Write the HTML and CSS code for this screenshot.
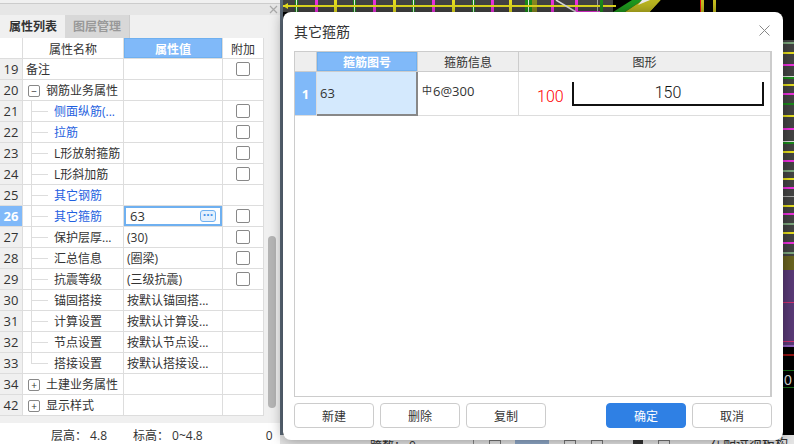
FILE: index.html
```html
<!DOCTYPE html>
<html lang="zh">
<head>
  <meta charset="UTF-8">
  <meta name="viewport" content="width=device-width, initial-scale=1.0">
  <title>其它箍筋</title>
  <link rel="stylesheet" href="styles.css">
</head>
<body>
  <!-- 左侧属性面板 -->
  <div class="panel">
    <div class="panel-title">
      <svg class="panel-close" width="9" height="9" viewBox="0 0 9 9"><path d="M1 1l7 7M8 1l-7 7" stroke="#aaa" stroke-width="1.2" fill="none"/></svg>
    </div>
    <div class="tabs">
      <div class="tab active">属性列表</div>
      <div class="tab">图层管理</div>
    </div>
    <div class="panel-body">
      <table class="prop-table">
        <colgroup><col class="c-idx"><col class="c-name"><col class="c-val"><col class="c-add"></colgroup>
        <thead>
          <tr><th class="blank"></th><th>属性名称</th><th class="sel-head">属性值</th><th>附加</th></tr>
        </thead>
        <tbody>
          <tr><td class="idx">19</td><td class="name">备注</td><td></td><td class="add"><span class="check"></span></td></tr>
          <tr><td class="idx">20</td><td class="name"><span class="group"><span class="toggle">−</span>钢筋业务属性</span></td><td></td><td></td></tr>
          <tr><td class="idx">21</td><td class="leaf link">侧面纵筋(...</td><td></td><td class="add"><span class="check"></span></td></tr>
          <tr><td class="idx">22</td><td class="leaf link">拉筋</td><td></td><td class="add"><span class="check"></span></td></tr>
          <tr><td class="idx">23</td><td class="leaf">L形放射箍筋</td><td></td><td class="add"><span class="check"></span></td></tr>
          <tr><td class="idx">24</td><td class="leaf">L形斜加筋</td><td></td><td class="add"><span class="check"></span></td></tr>
          <tr><td class="idx">25</td><td class="leaf link">其它钢筋</td><td></td><td></td></tr>
          <tr><td class="idx current">26</td><td class="leaf link">其它箍筋</td><td class="editing"><span class="edit-box"><span>63</span><span class="more">···</span></span></td><td class="add"><span class="check"></span></td></tr>
          <tr><td class="idx">27</td><td class="leaf">保护层厚...</td><td class="val">(30)</td><td class="add"><span class="check"></span></td></tr>
          <tr><td class="idx">28</td><td class="leaf">汇总信息</td><td class="val">(圈梁)</td><td class="add"><span class="check"></span></td></tr>
          <tr><td class="idx">29</td><td class="leaf">抗震等级</td><td class="val">(三级抗震)</td><td class="add"><span class="check"></span></td></tr>
          <tr><td class="idx">30</td><td class="leaf">锚固搭接</td><td class="val">按默认锚固搭...</td><td></td></tr>
          <tr><td class="idx">31</td><td class="leaf">计算设置</td><td class="val">按默认计算设...</td><td></td></tr>
          <tr><td class="idx">32</td><td class="leaf">节点设置</td><td class="val">按默认节点设...</td><td></td></tr>
          <tr><td class="idx">33</td><td class="leaf last">搭接设置</td><td class="val">按默认搭接设...</td><td></td></tr>
          <tr><td class="idx">34</td><td class="name"><span class="group"><span class="toggle">+</span>土建业务属性</span></td><td></td><td></td></tr>
          <tr><td class="idx">42</td><td class="name"><span class="group"><span class="toggle">+</span>显示样式</span></td><td></td><td></td></tr>
        </tbody>
      </table>
      <div class="scrollbar"><div class="thumb"></div></div>
    </div>
    <div class="panel-status">
      <span class="floor-h">层高：&nbsp;4.8</span>
      <span class="floor-e">标高：&nbsp;0~4.8</span>
      <span class="floor-n">0</span>
    </div>
  </div>

  <!-- 绘图区（只露出对话框四周） -->
  <div class="canvas">
    <svg class="drawing" width="514" height="435" viewBox="280 0 514 435">
      <rect x="280" y="0" width="514" height="435" fill="#000"/>
      <rect x="280" y="0" width="3" height="435" fill="#5d6b7a"/>
      <rect x="283" y="0" width="330" height="12" fill="#444"/>
      <rect x="295" y="0" width="3" height="12" fill="#1a8c1a"/><rect x="296" y="0" width="1" height="12" fill="#eee"/>
      <rect x="315" y="0" width="3" height="12" fill="#f030e0"/>
      <rect x="334" y="0" width="3" height="12" fill="#e8e020"/>
      <rect x="353" y="0" width="3" height="12" fill="#1a8c1a"/><rect x="354" y="0" width="1" height="12" fill="#eee"/>
      <rect x="373" y="0" width="3" height="12" fill="#f030e0"/>
      <rect x="393" y="0" width="3" height="12" fill="#e8e020"/>
      <rect x="412" y="0" width="3" height="12" fill="#1a8c1a"/><rect x="413" y="0" width="1" height="12" fill="#eee"/>
      <rect x="432" y="0" width="3" height="12" fill="#f030e0"/>
      <rect x="452" y="0" width="3" height="12" fill="#e8e020"/>
      <rect x="472" y="0" width="3" height="12" fill="#1a8c1a"/><rect x="473" y="0" width="1" height="12" fill="#eee"/>
      <rect x="491" y="0" width="3" height="12" fill="#f030e0"/>
      <rect x="509" y="0" width="3" height="12" fill="#e8e020"/>
      <rect x="525" y="0" width="7" height="12" fill="#1a8c1a"/><rect x="528" y="0" width="1" height="12" fill="#eee"/>
      <rect x="532" y="0" width="5" height="12" fill="#8a8a20"/>
      <rect x="551" y="0" width="3" height="12" fill="#f030e0"/>
      <rect x="575" y="0" width="3" height="12" fill="#f030e0"/>
      <rect x="575" y="11" width="25" height="1" fill="#f030e0"/>
      <rect x="597" y="0" width="1" height="12" fill="#aaa"/>
      <rect x="283" y="5" width="333" height="2" fill="#e8e020"/>
      <path d="M556 0l20 12" stroke="#ddd" stroke-width="1.5"/>
      <rect x="600" y="0" width="3" height="12" fill="#1a8c1a"/>
      <polygon points="613,12 625,12 643,0 632,0" fill="#1f9a1f"/>
      <polygon points="625,12 650,12 661,0 643,0" fill="#bcb820"/>
      <polygon points="642,0 650,0 638,5" fill="#eee"/>
      <polygon points="650,12 661,12 661,0" fill="#000"/>
      <rect x="700" y="0" width="1" height="12" fill="#e01010"/>
      <rect x="701" y="0" width="3" height="12" fill="#c8c020"/>
      <rect x="713" y="0" width="3" height="12" fill="#c8c020"/>
      <polygon points="283,6 288,3 288,9" fill="#e8e020"/>
      <rect x="783" y="40" width="11" height="216" fill="#444"/>
      <rect x="783" y="42" width="11" height="2" fill="#7ea87e"/>
      <rect x="783" y="52" width="11" height="2" fill="#e8e020"/>
      <rect x="783" y="64" width="11" height="2" fill="#f030e0"/>
      <rect x="783" y="76" width="11" height="1" fill="#ddd"/><rect x="783" y="77" width="11" height="2" fill="#1a8c1a"/>
      <rect x="783" y="84" width="11" height="2" fill="#e8e020"/>
      <rect x="783" y="93" width="11" height="2" fill="#f030e0"/>
      <rect x="783" y="103" width="11" height="2" fill="#1a8c1a"/>
      <rect x="783" y="115" width="11" height="2" fill="#e8e020"/>
      <rect x="783" y="128" width="11" height="2" fill="#f030e0"/>
      <rect x="783" y="141" width="11" height="1" fill="#ddd"/><rect x="783" y="142" width="11" height="2" fill="#1a8c1a"/>
      <rect x="783" y="151" width="11" height="2" fill="#e8e020"/>
      <rect x="783" y="160" width="11" height="2" fill="#f030e0"/>
      <rect x="783" y="170" width="11" height="2" fill="#7ea87e"/>
      <rect x="783" y="178" width="11" height="2" fill="#e8e020"/>
      <rect x="783" y="187" width="11" height="2" fill="#f030e0"/>
      <rect x="783" y="196" width="11" height="1" fill="#aaa"/>
      <rect x="783" y="205" width="11" height="2" fill="#e8e020"/>
      <rect x="783" y="213" width="11" height="2" fill="#f030e0"/>
      <rect x="783" y="223" width="11" height="2" fill="#7ea87e"/>
      <rect x="783" y="232" width="11" height="2" fill="#e8e020"/>
      <rect x="783" y="242" width="11" height="2" fill="#f030e0"/>
      <rect x="783" y="252" width="11" height="2" fill="#7ea87e"/>
      <rect x="783" y="256" width="11" height="14" fill="#6a6420"/>
      <rect x="783" y="270" width="11" height="76" fill="#5a3a78"/>
      <rect x="783" y="302" width="11" height="1" fill="#d03070"/>
      <rect x="783" y="341" width="11" height="1" fill="#d03070"/>
      <rect x="783" y="345" width="11" height="2" fill="#9060c0"/>
      <rect x="783" y="354" width="11" height="2" fill="#901010"/>
      <rect x="783" y="370" width="11" height="1" fill="#1a6c1a"/>
      <rect x="783" y="387" width="11" height="1" fill="#1a6c1a"/>
      <text x="784" y="385" fill="#ddd" font-size="14" font-family="Liberation Sans, sans-serif">0</text>
    </svg>
    <div class="canvas-status">
      <span class="cs-span">跨数：&nbsp;0</span>
      <span class="cs-tool cs-line"></span>
      <span class="cs-tool cs-box"></span>
      <span class="cs-tool cs-active"></span>
      <span class="cs-tool cs-box"></span>
      <span class="cs-tool cs-box"></span>
      <span class="cs-tool cs-dark"></span>
      <span class="cs-tool cs-box"></span>
      <span class="cs-hint">在配过须板构</span>
    </div>
  </div>

  <!-- 对话框 -->
  <div class="dialog">
    <div class="dialog-head">
      <span class="dialog-title">其它箍筋</span>
      <svg width="11" height="11" viewBox="0 0 11 11"><path d="M.5.5l10 10M10.5.5l-10 10" stroke="#888" stroke-width="1" fill="none"/></svg>
    </div>
    <div class="grid-wrap">
      <table class="stirrup-table">
        <colgroup><col class="s-idx"><col class="s-no"><col class="s-info"><col></colgroup>
        <thead>
          <tr><th></th><th class="sel-head">箍筋图号</th><th>箍筋信息</th><th>图形</th></tr>
        </thead>
        <tbody>
          <tr>
            <td class="idx current">1</td>
            <td class="cell-sel">63</td>
            <td class="cell-info"><span class="rebar">中</span>6@300</td>
            <td>
              <div class="shape">
                <span class="shape-left">100</span>
                <span class="shape-bar">150</span>
              </div>
            </td>
          </tr>
        </tbody>
      </table>
    </div>
    <div class="dialog-foot">
      <button class="btn">新建</button>
      <button class="btn">删除</button>
      <button class="btn">复制</button>
      <span class="spacer"></span>
      <button class="btn primary">确定</button>
      <button class="btn">取消</button>
    </div>
  </div>
</body>
</html>
```

FILE: styles.css
```css
* {
  box-sizing: border-box;
}
html, body {
  margin: 0;
  padding: 0;
}
body {
  position: relative;
  display: flex;
  width: 794px;
  height: 444px;
  overflow: hidden;
  font-family: "Open Sans", "Noto Sans CJK SC", sans-serif;
  font-size: 12px;
  color: #333;
  background: #fff;
}

/* 左侧面板 */
.panel {
  display: flex;
  flex-direction: column;
  flex: 0 0 280px;
  height: 444px;
  background: #f0f0f0;
  padding-top: 3px;
}
.panel-title {
  display: flex;
  justify-content: flex-end;
  align-items: center;
  height: 12px;
  padding-right: 2px;
  background: #e6e6e6;
  border-top: 1px solid #ccc;
}
.tabs {
  display: flex;
  height: 23px;
  padding-left: 1px;
}
.tab {
  width: 65px;
  line-height: 23px;
  text-align: center;
  color: #999;
  font-weight: 700;
  background: #d8d8d8;
  border-right: 1px solid #ccc;
}
.tab.active {
  width: 64px;
  color: #333;
  background: #f0f0f0;
  border-right: 0;
}
.panel-body {
  display: flex;
  height: 385px;
}

.prop-table, .stirrup-table {
  border-collapse: separate;
  border-spacing: 0;
  table-layout: fixed;
}
.prop-table {
  width: 264px;
  height: 378px;
  background: #fff;
}
.c-idx { width: 23px; }
.c-name { width: 101px; }
.c-val { width: 99px; }
.c-add { width: 41px; }

.prop-table th, .prop-table td {
  padding: 0;
  border-right: 1px solid #ddd;
  border-bottom: 1px solid #ddd;
  font-weight: 400;
  white-space: nowrap;
  overflow: hidden;
}
.prop-table th {
  height: 21px;
  padding-top: 1px;
  text-align: center;
}
.prop-table td {
  height: 21px;
  line-height: 20px;
}
.prop-table th.sel-head, .stirrup-table th.sel-head {
  color: #fff;
  background: #80b9f9;
  font-weight: 700;
  box-shadow: inset 0 0 0 1px #6fb0f0;
}
.prop-table td.idx, .stirrup-table td.idx {
  text-align: center;
  font-size: 13px;
  background: #f0f0f0;
}
.prop-table td.idx.current, .stirrup-table td.idx.current {
  color: #fff;
  font-weight: 700;
  background: #80b9f9;
}
.prop-table td.name {
  padding: 2px 0 0 3px;
  line-height: 18px;
}
.group {
  display: flex;
  align-items: center;
  gap: 6px;
  padding-left: 2px;
}
.toggle {
  display: flex;
  justify-content: center;
  align-items: center;
  width: 12px;
  height: 12px;
  border: 1px solid #888;
  border-radius: 2px;
  line-height: 1;
  font-size: 10px;
}
/* 树形连接线用背景画 */
.prop-table td.leaf {
  padding: 2px 0 0 31px;
  line-height: 18px;
  background:
    linear-gradient(#ddd, #ddd) 8px 0 / 1px 100% no-repeat,
    linear-gradient(#ddd, #ddd) 8px 50% / 17px 1px no-repeat;
}
.prop-table td.leaf.last {
  background:
    linear-gradient(#ddd, #ddd) 8px 0 / 1px 50% no-repeat,
    linear-gradient(#ddd, #ddd) 8px 50% / 17px 1px no-repeat;
}
.link {
  color: #1f5fe0;
}
.prop-table td.val {
  padding: 2px 0 0 3px;
  line-height: 18px;
}
.add {
  text-align: center;
}
.check {
  display: inline-block;
  width: 14px;
  height: 14px;
  margin-top: 3px;
  vertical-align: top;
  border: 1px solid #888;
  border-radius: 2px;
  background: #fff;
}
.edit-box {
  display: flex;
  justify-content: space-between;
  align-items: center;
  height: 20px;
  padding: 0 4px;
  font-size: 13px;
  border: 2px solid #6fb0f0;
}
.more {
  width: 16px;
  height: 12px;
  line-height: 8px;
  text-align: center;
  font-size: 12px;
  font-weight: 700;
  color: #3f8fe8;
  background: #e4f0fd;
  border: 1px solid #6fb0f0;
  border-radius: 3px;
}

.scrollbar {
  display: flex;
  flex: 0 0 16px;
  align-items: flex-start;
  padding: 198px 4px 0;
}
.thumb {
  width: 8px;
  height: 172px;
  border-radius: 4px;
  background: #b5b5b5;
}
.panel-status {
  flex: 1;
  display: flex;
  height: 21px;
  padding-top: 4px;
  line-height: 18px;
  background: #fff;
  font-size: 12px;
}
.floor-h { margin-left: 51px; }
.floor-e { margin-left: 26px; }
.floor-n { margin-left: 63px; }

/* 绘图区 */
.canvas {
  flex: 1;
  display: flex;
  flex-direction: column;
  background: #ddd;
}
.drawing {
  display: block;
  flex: none;
}
.canvas-status {
  display: flex;
  height: 9px;
  overflow: hidden;
  padding-top: 1px;
  line-height: 14px;
  background: #e4e4e4;
}
.cs-span { margin: 3px 0 0 90px; flex: none; width: 60px; }
.cs-tool {
  flex: none;
  height: 8px;
  margin-top: 4px;
}
.cs-line { width: 1px; margin-left: 43px; background: #888; }
.cs-box { width: 12px; margin-left: 15px; border: 1px solid #777; }
.cs-active { width: 34px; margin-left: 14px; background: #8fa8c8; }
.cs-dark { width: 10px; margin-left: 30px; background: #333; }
.cs-hint { margin-left: 40px; font-size: 13px; white-space: nowrap; }

/* 对话框 */
.dialog {
  position: absolute;
  left: 283px;
  top: 12px;
  display: flex;
  flex-direction: column;
  width: 500px;
  height: 428px;
  padding: 0 11px 12px;
  background: #fff;
  border-radius: 8px;
  box-shadow: 0 0 14px rgba(0, 0, 0, 0.4);
}
.dialog-head {
  display: flex;
  justify-content: space-between;
  align-items: center;
  height: 39px;
  padding: 0 2px 2px 0;
}
.dialog-title {
  font-size: 14px;
}
.grid-wrap {
  height: 346px;
  border: 1px solid #ccc;
  border-right-width: 2px;
}
.stirrup-table {
  width: 100%;
}
.s-idx { width: 22px; }
.s-no { width: 101px; }
.s-info { width: 101px; }
.stirrup-table th {
  height: 20px;
  padding: 0;
  font-weight: 400;
  background: #eee;
  border-right: 1px solid #ccc;
  border-bottom: 1px solid #ccc;
}
.stirrup-table th:last-child {
  border-right: 0;
}
.stirrup-table td {
  height: 44px;
  padding: 0;
  border-right: 1px solid #ddd;
  border-bottom: 1px solid #ddd;
}
.stirrup-table td:last-child {
  border-right: 0;
}
.stirrup-table td.cell-sel {
  padding-left: 3px;
  font-size: 13px;
  background: #d4e9fd;
  border-right: 2px solid #888;
  border-bottom: 2px solid #888;
}
.stirrup-table td.cell-info {
  padding: 0 0 6px 4px;
  font-size: 13px;
}
.rebar {
  font-size: 10px;
  vertical-align: 2px;
  margin-right: 1px;
}
.shape {
  display: flex;
  align-items: center;
  height: 43px;
  padding: 0 6px 0 18px;
}
.shape-left {
  width: 35px;
  padding-top: 6px;
  color: #f00;
  font-family: Roboto, sans-serif;
  font-weight: 300;
  font-size: 16px;
}
.shape-bar {
  flex: 1;
  height: 24px;
  line-height: 21px;
  text-align: center;
  color: #111;
  font-family: Roboto, sans-serif;
  font-weight: 300;
  font-size: 16px;
  border: 2px solid #111;
  border-top: 0;
}
.dialog-foot {
  display: flex;
  gap: 6px;
  margin-top: 6px;
}
.spacer {
  flex: 1;
}
.btn {
  width: 80px;
  height: 25px;
  padding: 0;
  font: inherit;
  color: #333;
  background: #fff;
  border: 1px solid #ccc;
  border-radius: 4px;
}
.btn.primary {
  color: #fff;
  background: #2f80e4;
  border-color: #2f80e4;
}
```
